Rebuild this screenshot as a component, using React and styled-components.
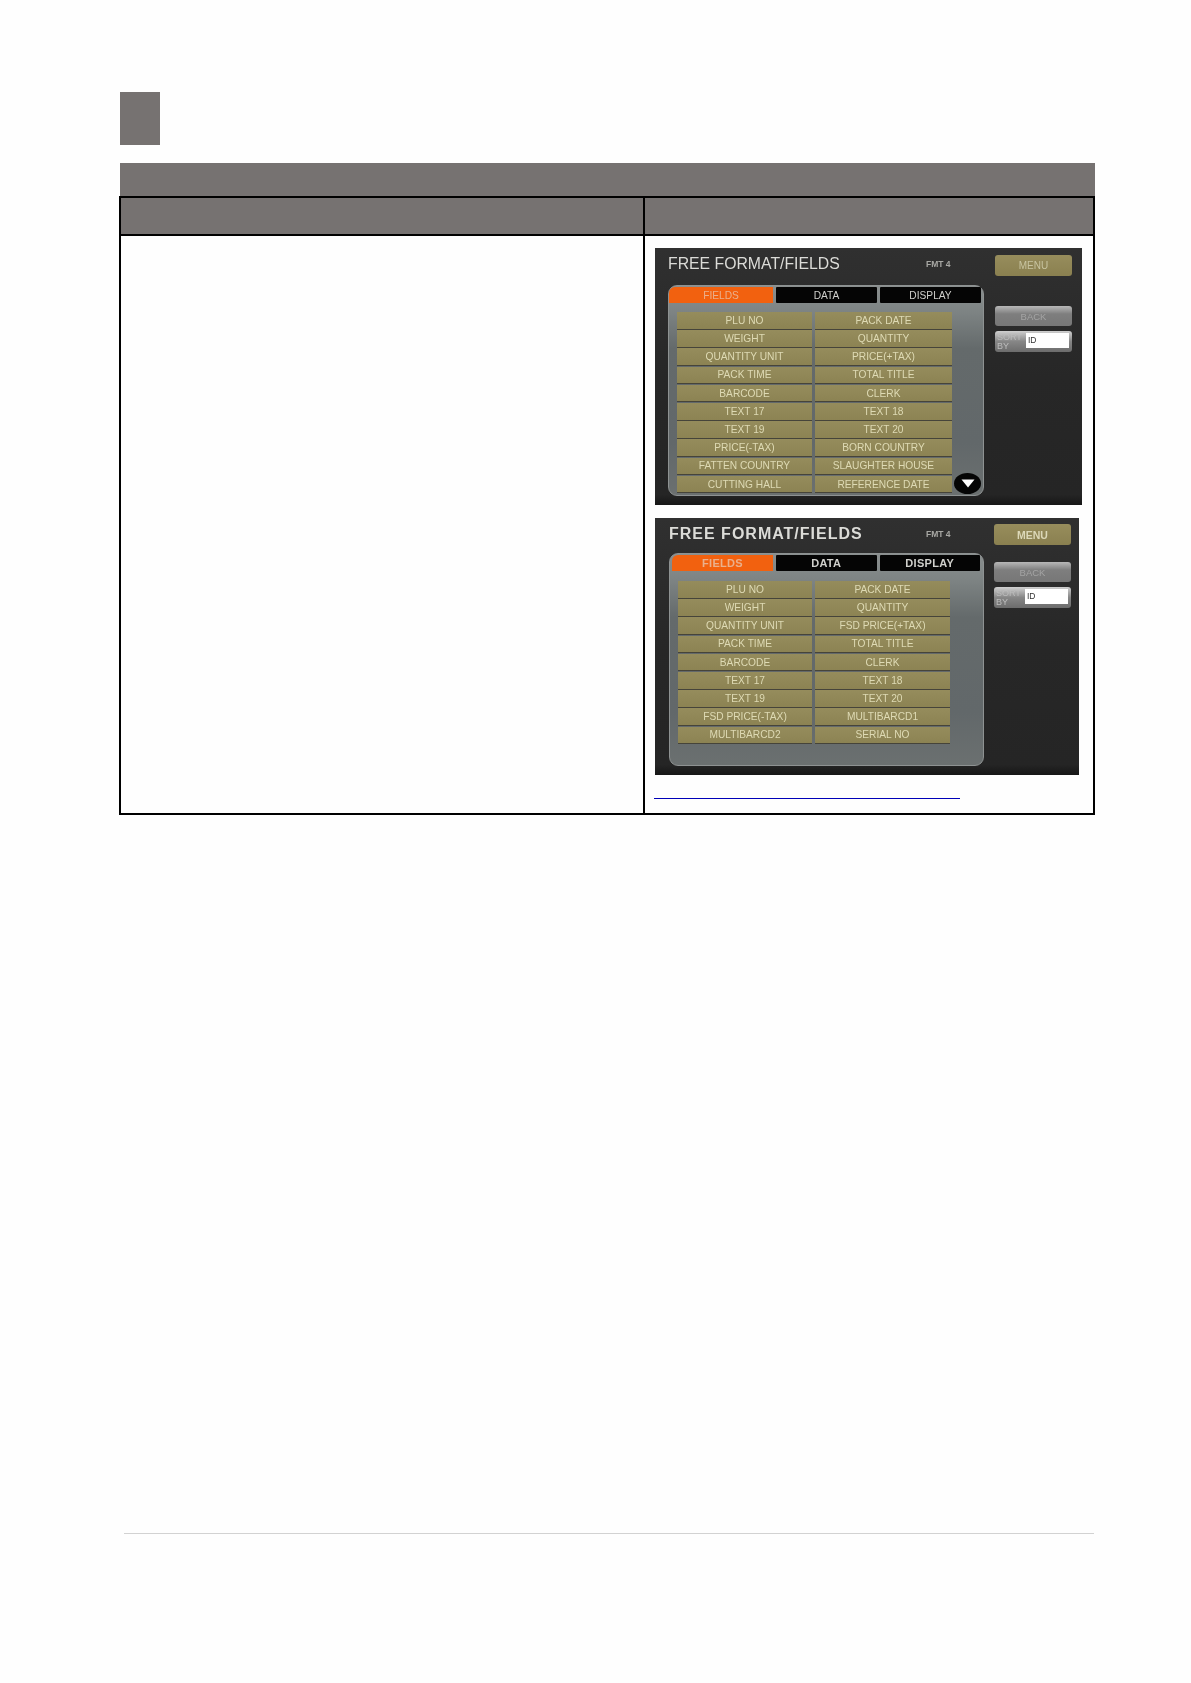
import React from "react";
import styled, { createGlobalStyle } from "styled-components";

const Global = createGlobalStyle`
  html, body { margin: 0; padding: 0; background: #fefefe; }
  body { font-family: "Liberation Sans", Arial, sans-serif; }
`;

const Page = styled.div`
  width: 1191px;
  height: 1683px;
  box-sizing: border-box;
  padding: 92px 96px 0 120px;
  overflow: hidden;
`;

const SectionMark = styled.div`
  width: 40px;
  height: 53px;
  background: #767271;
`;

const Band = styled.div`
  height: 33px;
  margin-top: 18px;
  background: #767271;
`;

const Table = styled.div`
  display: grid;
  grid-template-columns: 522px 1fr;
  width: 976px;
  margin-left: -1px;
  box-sizing: border-box;
  border: 2px solid #000;
`;

const HeadCell = styled.div`
  height: 36px;
  background: #767271;
  border-bottom: 2px solid #000;
  border-left: ${(p) => (p.$divider ? "2px solid #000" : "none")};
`;

const TextCell = styled.div`
  height: 576.5px;
`;

const ImageCell = styled.div`
  height: 576.5px;
  box-sizing: border-box;
  border-left: 2px solid #000;
  padding: 12px 0 0 10px;
`;

const Screen = styled.div`
  display: flex;
  width: ${(p) => p.$w}px;
  height: 257px;
  box-sizing: border-box;
  margin-bottom: 13px;
  padding-left: ${(p) => p.$left}px;
  overflow: hidden;
  color: #d8d4b0;
  background: linear-gradient(180deg, #303030 0%, #272727 50%, #252525 96%, #161616 100%);
  filter: blur(0.6px);
`;

const MainColumn = styled.div`
  width: ${(p) => p.$w}px;
  flex: none;
`;

const TitleRow = styled.div`
  display: flex;
  align-items: center;
  height: ${(p) => p.$h}px;
  padding-bottom: ${(p) => p.$pad}px;
  box-sizing: border-box;
`;

const Title = styled.div`
  width: ${(p) => p.$w}px;
  flex: none;
  font-size: ${(p) => p.$size}px;
  font-weight: ${(p) => (p.$bold ? 700 : 400)};
  letter-spacing: ${(p) => p.$spacing}px;
  color: #dcdcd8;
  white-space: nowrap;
`;

const FormatTag = styled.div`
  font-size: 8.5px;
  font-weight: 700;
  color: #a8a8a4;
  white-space: nowrap;
`;

const Panel = styled.div`
  position: relative;
  height: ${(p) => p.$h}px;
  box-sizing: border-box;
  padding: 1px 2px 1px ${(p) => p.$inset}px;
  border: 1px solid #8e9292;
  border-radius: 9px;
  background: linear-gradient(180deg, #8a8f8f 0%, #7e8484 12%, #646a6b 30%, #62686a 75%, #6b7070 100%);
`;

const Tabs = styled.div`
  display: grid;
  grid-template-columns: ${(p) => p.$first}px ${(p) => p.$w}px ${(p) => p.$w}px;
  gap: 3px;
  height: 16px;
`;

const Tab = styled.div`
  display: flex;
  align-items: center;
  justify-content: center;
  font-size: ${(p) => (p.$bold ? 11 : 10.2)}px;
  font-weight: ${(p) => (p.$bold ? 700 : 400)};
  letter-spacing: ${(p) => (p.$bold ? 0.3 : 0)}px;
  color: ${(p) => (p.$active ? "#eab08c" : "#d0d0cc")};
  background: ${(p) => (p.$active ? "#f2610f" : "#050505")};
  border-radius: ${(p) => (p.$active ? "6px 0 0 0" : "1px")};
`;

const FieldGrid = styled.div`
  display: grid;
  grid-template-columns: ${(p) => p.$a}px ${(p) => p.$b}px;
  grid-auto-rows: 16.7px;
  column-gap: 3px;
  row-gap: 1.5px;
  margin: ${(p) => p.$top}px 0 0 ${(p) => p.$left}px;
`;

const Field = styled.div`
  display: flex;
  align-items: center;
  justify-content: center;
  font-size: 10.2px;
  color: #dedab4;
  white-space: nowrap;
  background: linear-gradient(180deg, #958c5c 0%, #8c8353 100%);
  box-shadow: 0 1px 0 #46443a;
`;

const ScrollButton = styled.div`
  position: absolute;
  right: 2px;
  bottom: 1px;
  display: flex;
  align-items: center;
  justify-content: center;
  width: 27px;
  height: 21px;
  border-radius: 50%;
  background: #050505;
`;

const SideColumn = styled.div`
  width: 77px;
  flex: none;
  margin-left: ${(p) => p.$gap}px;
`;

const MenuButton = styled.div`
  display: flex;
  align-items: center;
  justify-content: center;
  height: 21px;
  margin-top: ${(p) => p.$top}px;
  border-radius: 3px;
  font-size: ${(p) => (p.$bold ? 10.5 : 10)}px;
  font-weight: ${(p) => (p.$bold ? 700 : 400)};
  color: ${(p) => (p.$bold ? "#dcd8b8" : "#c8c4a0")};
  background: linear-gradient(180deg, #978d5c 0%, #8a8050 100%);
`;

const BackButton = styled.div`
  display: flex;
  align-items: center;
  justify-content: center;
  height: 20px;
  margin-top: ${(p) => p.$top}px;
  border-radius: 3px;
  font-size: 9.5px;
  color: #a4a4a4;
  background: linear-gradient(180deg, #b8b8b8 0%, #7e7e7e 40%, #777 100%);
`;

const SortBox = styled.div`
  display: flex;
  align-items: flex-start;
  height: 21px;
  margin-top: 5px;
  padding: 2px 3px 0 0;
  box-sizing: border-box;
  border-radius: 3px;
  background: linear-gradient(180deg, #d0d0d0 0%, #868686 50%, #6c6c6c 100%);
`;

const SortLabel = styled.div`
  width: 31px;
  flex: none;
  padding-left: 2px;
  box-sizing: border-box;
  font-size: 9px;
  line-height: 9px;
  color: #bcbcbc;
`;

const SortValue = styled.div`
  flex: 1;
  height: 15px;
  line-height: 14px;
  padding-left: 2px;
  font-size: 8.5px;
  color: #333;
  background: #fff;
`;

const LinkLine = styled.div`
  width: 306px;
  height: 1px;
  margin: 23px 0 0 -1px;
  background: #0000b8;
`;

const FooterRule = styled.div`
  width: 970px;
  height: 1px;
  margin: 718.5px 0 0 4px;
  background: #d2d2d2;
`;

const FIRST = [
  "PLU NO", "PACK DATE", "WEIGHT", "QUANTITY", "QUANTITY UNIT", "PRICE(+TAX)",
  "PACK TIME", "TOTAL TITLE", "BARCODE", "CLERK", "TEXT 17", "TEXT 18",
  "TEXT 19", "TEXT 20", "PRICE(-TAX)", "BORN COUNTRY", "FATTEN COUNTRY",
  "SLAUGHTER HOUSE", "CUTTING HALL", "REFERENCE DATE",
];

const SECOND = [
  "PLU NO", "PACK DATE", "WEIGHT", "QUANTITY", "QUANTITY UNIT", "FSD PRICE(+TAX)",
  "PACK TIME", "TOTAL TITLE", "BARCODE", "CLERK", "TEXT 17", "TEXT 18",
  "TEXT 19", "TEXT 20", "FSD PRICE(-TAX)", "MULTIBARCD1", "MULTIBARCD2", "SERIAL NO",
];

function DeviceScreen({ v, fields, scroll }) {
  return (
    <Screen $w={v.w} $left={v.left}>
      <MainColumn $w={v.main}>
        <TitleRow $h={v.titleH} $pad={v.titlePad}>
          <Title $w={v.titleW} $size={v.titleSize} $bold={v.bold} $spacing={v.spacing}>
            FREE FORMAT/FIELDS
          </Title>
          <FormatTag>FMT 4</FormatTag>
        </TitleRow>
        <Panel $h={v.panelH} $inset={v.inset}>
          <Tabs $first={v.tabFirst} $w={v.tabW}>
            <Tab $active $bold={v.bold}>FIELDS</Tab>
            <Tab $bold={v.bold}>DATA</Tab>
            <Tab $bold={v.bold}>DISPLAY</Tab>
          </Tabs>
          <FieldGrid $a={v.colA} $b={v.colB} $left={v.gridLeft} $top={v.gridTop}>
            {fields.map((f, i) => (
              <Field key={i}>{f}</Field>
            ))}
          </FieldGrid>
          {scroll && (
            <ScrollButton>
              <svg width="14" height="9" viewBox="0 0 14 9">
                <path d="M0.5 0.5H13.5L7 8.5Z" fill="#fff" />
              </svg>
            </ScrollButton>
          )}
        </Panel>
      </MainColumn>
      <SideColumn $gap={v.gap}>
        <MenuButton $top={v.menuTop} $bold={v.bold}>MENU</MenuButton>
        <BackButton $top={v.backTop}>BACK</BackButton>
        <SortBox>
          <SortLabel>SORT BY</SortLabel>
          <SortValue>ID</SortValue>
        </SortBox>
      </SideColumn>
    </Screen>
  );
}

const V1 = {
  w: 427, left: 13, main: 316, titleW: 258, titleH: 37, titlePad: 5, titleSize: 15.8, bold: false, spacing: 0,
  panelH: 211, inset: 0, tabFirst: 104, tabW: 101, gridLeft: 8, gridTop: 9, colA: 135, colB: 137, gap: 11, menuTop: 7, backTop: 30,
};
const V2 = {
  w: 424, left: 14, main: 315, titleW: 257, titleH: 35, titlePad: 3, titleSize: 16, bold: true, spacing: 1,
  panelH: 213, inset: 2, tabFirst: 101, tabW: 100.5, gridLeft: 6, gridTop: 10, colA: 134, colB: 135, gap: 10, menuTop: 6, backTop: 17,
};

export default function App() {
  return (
    <Page>
      <Global />
      <SectionMark />
      <Band />
      <Table>
        <HeadCell />
        <HeadCell $divider />
        <TextCell />
        <ImageCell>
          <DeviceScreen v={V1} fields={FIRST} scroll />
          <DeviceScreen v={V2} fields={SECOND} />
          <LinkLine />
        </ImageCell>
      </Table>
      <FooterRule />
    </Page>
  );
}
